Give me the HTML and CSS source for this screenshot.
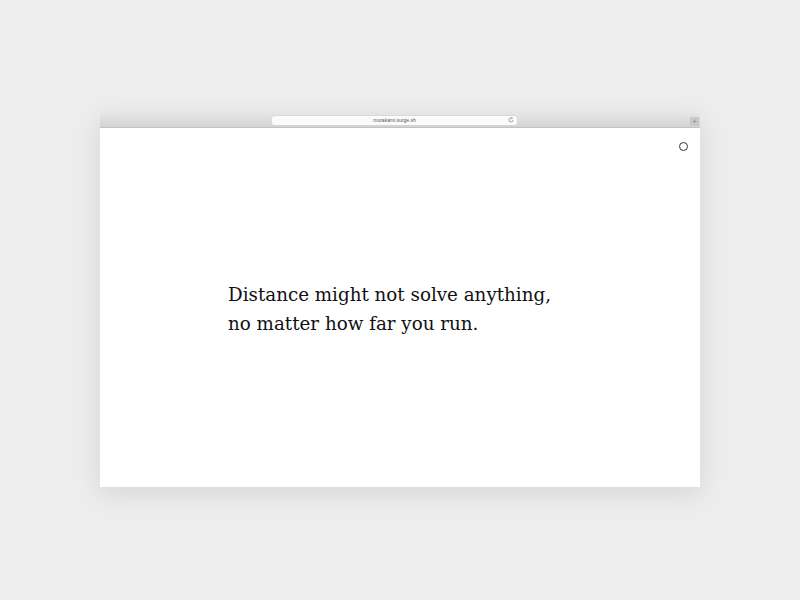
FILE: index.html
```html
<!DOCTYPE html>
<html>
<head>
<meta charset="utf-8">
<link rel="stylesheet" href="styles.css">
</head>
<body>
<div class="stage">
  <div class="window">
    <div class="toolbar">
      <div class="address">
        <span class="url">murakami.surge.sh</span>
        <svg class="reload" width="6" height="6" viewBox="0 0 6 6"><path d="M5 3 A2 2 0 1 1 3.6 1.1" fill="none" stroke="#888" stroke-width="0.8"/><path d="M3.2 0.3 L4.6 1.2 L3.3 2" fill="none" stroke="#888" stroke-width="0.7"/></svg>
      </div>
      <div class="plus">+</div>
    </div>
    <div class="page">
      <div class="toggle"></div>
      <p class="quote">Distance might not solve anything,<br>no matter how far you run.</p>
    </div>
  </div>
</div>
</body>
</html>
```
FILE: styles.css
```css
html, body { margin: 0; padding: 0; }
body { background: #ededed; width: 800px; height: 600px; overflow: hidden; }
.stage { padding: 113px 100px 0 100px; }
.window {
  width: 600px;
  background: #fff;
  box-shadow: 0 6px 24px rgba(0,0,0,0.10);
}
.toolbar {
  height: 14px;
  background: linear-gradient(#e6e6e6, #d4d4d4);
  border-bottom: 1px solid #c2c2c2;
  display: flex;
  align-items: center;
  position: relative;
}
.address {
  margin-left: 172px;
  width: 245px;
  height: 9px;
  background: #fbfbfb;
  border-radius: 2px;
  box-shadow: 0 0 0 0.5px #cfcfcf;
  display: flex;
  align-items: center;
  justify-content: center;
  position: relative;
}
.url {
  font-family: "Liberation Sans", Arial, sans-serif;
  font-size: 5px;
  color: #555;
  line-height: 1;
}
.reload { position: absolute; right: 3px; top: 1.5px; }
.plus {
  position: absolute;
  right: 1px;
  top: 4px;
  width: 9px;
  height: 9px;
  background: #c8c8c8;
  color: #888;
  font-family: "Liberation Sans", sans-serif;
  font-size: 8px;
  line-height: 9px;
  text-align: center;
}
.page {
  height: 359px;
  position: relative;
  display: flex;
  align-items: center;
  padding-left: 128px;
}
.toggle {
  position: absolute;
  right: 12px;
  top: 14px;
  width: 7px;
  height: 7px;
  border: 1.2px solid #333;
  border-radius: 50%;
}
.quote {
  margin: 0;
  font-family: "DejaVu Serif", serif;
  font-size: 18.3px;
  line-height: 29px;
  color: #111;
  margin-top: 2px;
}
```
